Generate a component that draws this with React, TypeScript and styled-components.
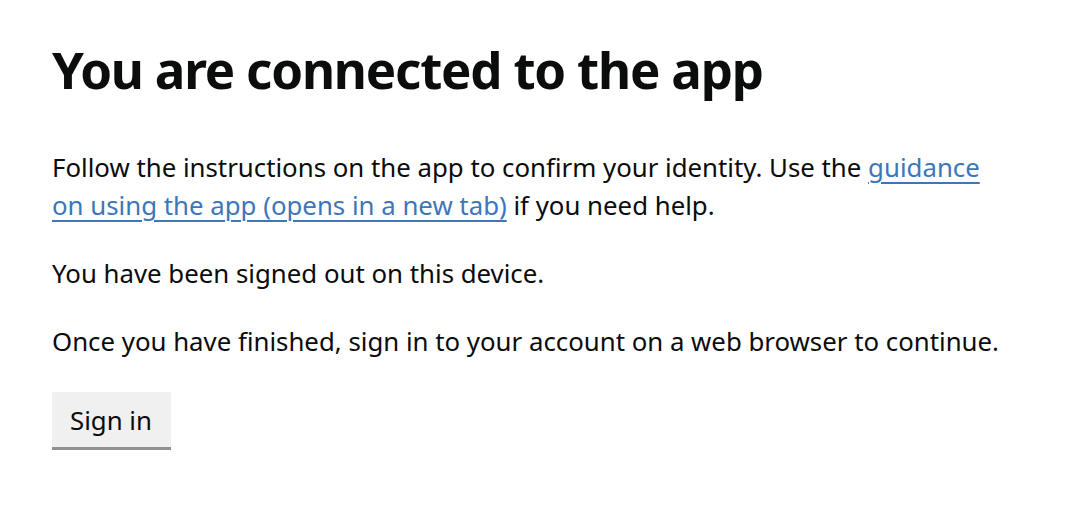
import React from "react";
import styled, { createGlobalStyle } from "styled-components";

const Global = createGlobalStyle`
  html, body { margin: 0; padding: 0; background: #ffffff; }
  body { font-family: "Noto Sans", "Open Sans", Arial, sans-serif; color: #0b0c0c; }
`;

const Page = styled.main`
  padding: 33px 52px 0 52px;
  width: 955px;
`;

const Heading = styled.h1`
  margin: 0 0 43px 0;
  font-size: 51px;
  line-height: 72px;
  font-weight: 700;
  letter-spacing: -1.2px;
`;

const Body = styled.p`
  margin: 0 0 30px 0;
  font-size: 25.8px;
  line-height: 38px;
  font-weight: 400;
`;

const Link = styled.a`
  color: #3d76b9;
  text-decoration: underline;
  text-decoration-thickness: 2px;
  text-underline-offset: 5px;
`;

const Button = styled.button`
  font-family: inherit;
  font-size: 25.8px;
  line-height: 30px;
  color: #0b0c0c;
  background: #f0f0f0;
  border: 0;
  border-bottom: 3px solid #929191;
  border-radius: 0;
  padding: 13px 19px 12px 18px;
  margin-top: 2px;
  cursor: pointer;
`;

export default function App() {
  return (
    <>
      <Global />
      <Page>
        <Heading>You are connected to the app</Heading>
        <Body>
          Follow the instructions on the app to confirm your identity. Use the{" "}
          <Link href="#">guidance on using the app (opens in a new tab)</Link> if you need help.
        </Body>
        <Body>You have been signed out on this device.</Body>
        <Body>Once you have finished, sign in to your account on a web browser to continue.</Body>
        <Button>Sign in</Button>
      </Page>
    </>
  );
}
